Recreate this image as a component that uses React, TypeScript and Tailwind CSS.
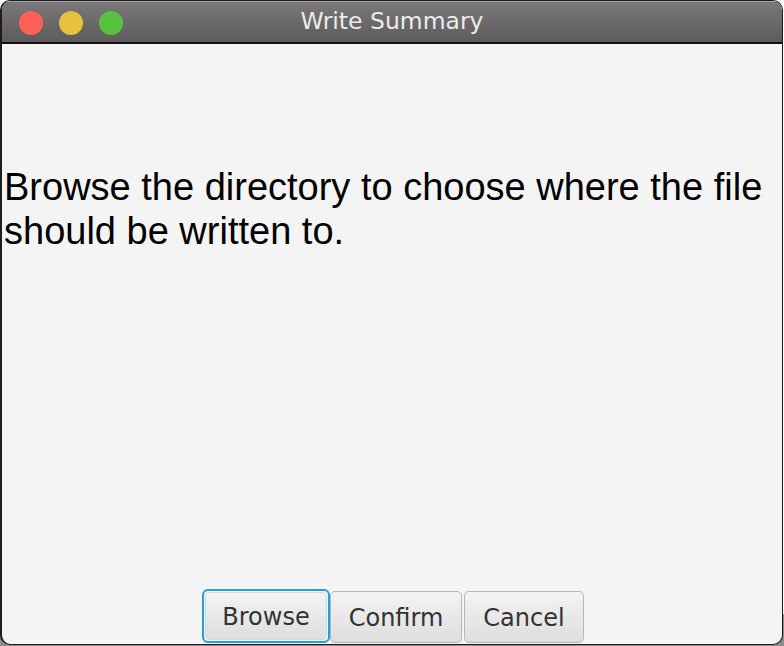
import React from 'react';

const WriteSummaryDialog = () => {
  return (
    <div className="w-[784px] h-[646px] bg-linear-to-b from-white from-95% to-[#8e8e8e] to-95% overflow-hidden">
      <div className="w-[783px] h-[645px] flex flex-col rounded-[10px] border border-[#1c1c1c] border-l-2 overflow-hidden bg-[#f4f4f4]">
        {/* title bar */}
        <div className="relative h-[43px] shrink-0 flex items-center justify-center bg-linear-to-b from-[#7a7878] to-[#5d5b5b] border-t border-[#a6a4a4] border-b-2 border-b-[#111]">
          <div className="absolute left-[17px] top-[9px] flex gap-[16px]">
            <span className="w-[24px] h-[24px] rounded-full bg-[#fe5f57]" />
            <span className="w-[24px] h-[24px] rounded-full bg-[#e7c03e]" />
            <span className="w-[24px] h-[24px] rounded-full bg-[#57c23d]" />
          </div>
          <span className="text-[#ebebeb] text-[23.5px] leading-none font-['DejaVu_Sans',sans-serif]">
            Write Summary
          </span>
        </div>

        {/* body */}
        <div className="flex-1 flex flex-col">
          <p className="pt-[121px] pl-[2px] pr-[8px] text-black text-[38px] leading-[44px] font-['Liberation_Sans',Arial,sans-serif]">
            Browse the directory to choose where the file should be written to.
          </p>
          <div className="flex-1" />
          <div className="flex justify-center items-end pb-[1px] pl-[2px] font-['DejaVu_Sans',sans-serif] text-[24px] text-[#333]">
            <button className="w-[128px] h-[54px] rounded-[6px] border-2 border-[#1fa2dc] p-px">
              <div className="w-full h-full rounded-[4px] border border-[#d8d8d8] bg-linear-to-b from-[#f3f3f3] to-[#dedede] flex items-center justify-center pt-[2px]">
                Browse
              </div>
            </button>
            <button className="w-[132px] h-[52px] rounded-[5px] border border-[#b6b6b6] bg-linear-to-b from-[#f3f3f3] to-[#dedede] flex items-center justify-center pt-[2px]">
              Confirm
            </button>
            <button className="ml-[2px] w-[120px] h-[52px] rounded-[5px] border border-[#b6b6b6] bg-linear-to-b from-[#f3f3f3] to-[#dedede] flex items-center justify-center pt-[2px]">
              Cancel
            </button>
          </div>
        </div>
      </div>
    </div>
  );
};

export default function App() {
  return <WriteSummaryDialog />;
}
